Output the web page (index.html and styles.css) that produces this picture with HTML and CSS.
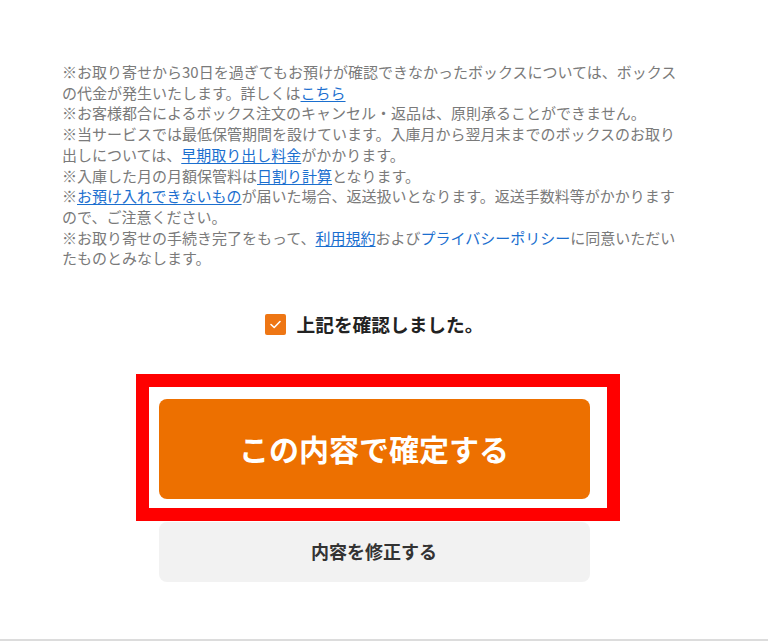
FILE: index.html
```html
<!DOCTYPE html>
<html lang="ja">
<head>
<meta charset="utf-8">
<title>確認</title>
<link rel="stylesheet" href="styles.css">
</head>
<body>
<div class="page">
  <div class="notes">
    <p>※お取り寄せから30日を過ぎてもお預けが確認できなかったボックスについては、ボックスの代金が発生いたします。詳しくは<a href="#" class="link">こちら</a></p>
    <p>※お客様都合によるボックス注文のキャンセル・返品は、原則承ることができません。</p>
    <p>※当サービスでは最低保管期間を設けています。入庫月から翌月末までのボックスのお取り出しについては、<a href="#" class="link">早期取り出し料金</a>がかかります。</p>
    <p>※入庫した月の月額保管料は<a href="#" class="link">日割り計算</a>となります。</p>
    <p>※<a href="#" class="link">お預け入れできないもの</a>が届いた場合、返送扱いとなります。返送手数料等がかかりますので、ご注意ください。</p>
    <p>※お取り寄せの手続き完了をもって、<a href="#" class="link">利用規約</a>および<a href="#" class="link plain">プライバシーポリシー</a>に同意いただいたものとみなします。</p>
  </div>

  <label class="confirm">
    <span class="checkbox">
      <svg width="21" height="21" viewBox="0 0 21 21"><path d="M6 10.5 L9.2 13.5 L15 7.5" fill="none" stroke="#fff" stroke-width="1.6" stroke-linecap="round" stroke-linejoin="round"/></svg>
    </span>
    <span class="confirm-text">上記を確認しました。</span>
  </label>

  <div class="actions">
    <button class="btn-primary">この内容で確定する</button>
    <button class="btn-secondary">内容を修正する</button>
  </div>
</div>
<div class="footer-line"></div>
<div class="highlight"></div>
</body>
</html>
```

FILE: styles.css
```css
html, body {
  margin: 0;
  padding: 0;
  background: #fff;
}
body {
  font-family: "Noto Sans CJK JP", "Noto Sans", sans-serif;
  position: relative;
  width: 768px;
  height: 641px;
  overflow: hidden;
}
.page {
  padding: 62px 0 0 62px;
  width: 624px;
}
.notes {
  font-size: 15px;
  line-height: 20.7px;
  color: #7a7a7a;
}
.notes p {
  margin: 0;
}
.link {
  color: #1b6fcf;
  text-decoration: underline;
  text-underline-offset: 2px;
}
.link.plain {
  text-decoration: none;
}
.confirm {
  display: flex;
  align-items: center;
  justify-content: center;
  gap: 11px;
  margin-top: 43px;
  height: 24px;
}
.checkbox {
  width: 21px;
  height: 21px;
  background: #ee7614;
  border-radius: 2px;
  display: flex;
}
.confirm-text {
  font-size: 18.7px;
  font-weight: bold;
  color: #222;
  line-height: 24px;
}
.actions {
  display: flex;
  flex-direction: column;
  align-items: center;
  margin-top: 63px;
}
.btn-primary,
.btn-secondary {
  font-family: "Noto Sans CJK JP", "Noto Sans", sans-serif;
  border: none;
  width: 431px;
  border-radius: 8px;
  font-weight: bold;
  display: flex;
  align-items: center;
  justify-content: center;
  padding: 0;
}
.btn-primary {
  height: 100px;
  background: #ed7000;
  color: #fff;
  font-size: 30px;
  padding-bottom: 3px;
}
.btn-secondary {
  margin-top: 23px;
  height: 60px;
  background: #f2f2f2;
  color: #333;
  font-size: 18px;
  padding-bottom: 2px;
}
.footer-line {
  position: absolute;
  left: 0;
  right: 0;
  top: 639px;
  border-top: 2px solid #dcdcdc;
}
.highlight {
  position: absolute;
  left: 136px;
  top: 374px;
  width: 484px;
  height: 147px;
  box-sizing: border-box;
  border: 13px solid #ff0000;
  pointer-events: none;
}
```
